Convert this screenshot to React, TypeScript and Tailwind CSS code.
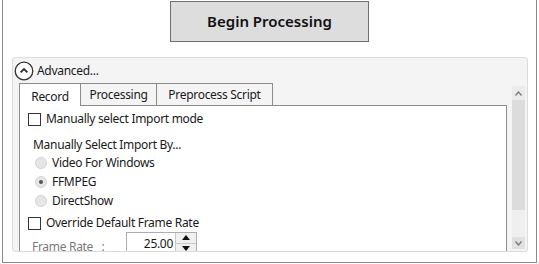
import React from "react";

const font = { fontFamily: '"Noto Sans", "Segoe UI", sans-serif' };

function Checkbox({ label }: { label: string }) {
  return (
    <div className="flex h-[18px] items-center pl-[8px]">
      <div className="h-[13px] w-[13px] border border-[#333333] bg-white" />
      <span className="ml-[5px] text-[12px] leading-none tracking-[-0.3px] text-[#1a1a1a]">{label}</span>
    </div>
  );
}

function Radio({ label, checked }: { label: string; checked?: boolean }) {
  return (
    <div className="flex h-[19px] items-center pl-[15px]">
      <div className="flex h-[12px] w-[12px] items-center justify-center rounded-full border border-[#d2d2d2] bg-[#e6e6e6]">
        {checked && <div className="h-[4px] w-[4px] rounded-full bg-[#555555]" />}
      </div>
      <span className="ml-[5px] text-[12px] leading-none tracking-[-0.3px] text-[#1a1a1a]">{label}</span>
    </div>
  );
}

export default function App() {
  return (
    <div className="h-[264px] w-[539px] overflow-hidden bg-white" style={font}>
      <div className="ml-[2px] h-[263px] w-[535px] border-x border-b border-[#8a8a8a]">
        <div className="flex justify-center pt-[1px]">
          <div className="flex h-[41px] w-[199px] items-center justify-center border border-[#707070] bg-[#dddddd] text-[15px] font-semibold text-[#111111]">
            Begin Processing
          </div>
        </div>
        <div className="ml-[9px] mt-[15px] h-[195px] w-[516px] overflow-hidden rounded-[3px] border border-[#dcdcdc] bg-[#f4f4f4]">
          <div className="flex h-[25px] items-center pl-[1px] pt-[1px]">
            <svg width="20" height="20" viewBox="0 0 20 20">
              <circle cx="10" cy="10" r="8.8" fill="white" stroke="#333333" strokeWidth="1.3" />
              <path d="M6.6 11.4 L10 8 L13.4 11.4" fill="none" stroke="#333333" strokeWidth="1.9" />
            </svg>
            <span className="ml-[3px] text-[12px] leading-none tracking-[-0.3px] text-[#1a1a1a]">Advanced...</span>
          </div>
          <div className="flex">
            <div className="ml-[6px] w-[488px]">
              <div className="flex h-[23px] text-[12px] leading-none tracking-[-0.3px] text-[#1a1a1a]">
                <div className="flex w-[62px] items-center justify-center border-x border-t border-[#8c8c8c] bg-white pt-[3px]">Record</div>
                <div className="flex w-[76px] items-center justify-center border-t border-r border-b border-[#8c8c8c]">Processing</div>
                <div className="flex w-[116px] items-center justify-center border-t border-r border-b border-[#8c8c8c]">Preprocess Script</div>
                <div className="flex-1 border-b border-[#8c8c8c]" />
              </div>
              <div className="h-[150px] border-x border-[#8c8c8c] bg-white pt-[4px]">
                <Checkbox label="Manually select Import mode" />
                <div className="mt-[9px] flex h-[16px] items-center pl-[13px] text-[12px] leading-none tracking-[-0.3px] text-[#1a1a1a]">
                  Manually Select Import By...
                </div>
                <Radio label="Video For Windows" />
                <Radio label="FFMPEG" checked />
                <Radio label="DirectShow" />
                <div className="mt-[4px]">
                  <Checkbox label="Override Default Frame Rate" />
                </div>
                <div className="flex items-start">
                  <div className="ml-[12px] mt-[9px] w-[94px] text-[12px] leading-none tracking-[-0.3px] text-[#7a7a7a]">Frame Rate&nbsp;&nbsp;&nbsp;:</div>
                  <div className="flex h-[22px] w-[71px] border border-[#abadb3] bg-white">
                    <div className="flex flex-1 items-center justify-end pr-[2px] pt-[1px] text-[12px] leading-none tracking-[-0.3px] text-[#1a1a1a]">25.00</div>
                    <div className="flex w-[21px] flex-col border-l border-[#c8c8c8]">
                      <div className="flex h-[11px] items-center justify-center border-b border-[#c8c8c8] bg-[#f0f0f0]">
                        <svg width="8" height="5" viewBox="0 0 8 5"><path d="M0 5 L4 0 L8 5 Z" fill="#111" /></svg>
                      </div>
                      <div className="flex h-[10px] items-center justify-center bg-[#f0f0f0]">
                        <svg width="8" height="5" viewBox="0 0 8 5"><path d="M0 0 L4 5 L8 0 Z" fill="#111" /></svg>
                      </div>
                    </div>
                  </div>
                </div>
              </div>
            </div>
            <div className="ml-[5px] mt-[3px] flex h-[163px] w-[13px] flex-col bg-[#efefef]">
              <div className="flex h-[14px] items-center justify-center bg-[#ebebeb]">
                <svg width="7" height="5" viewBox="0 0 7 5"><path d="M0.5 4.5 L3.5 1 L6.5 4.5" fill="none" stroke="#777" strokeWidth="1.3" /></svg>
              </div>
              <div className="h-[110px] bg-[#dcdcdc]" />
              <div className="flex-1" />
              <div className="flex h-[12px] items-center justify-center bg-[#e0e0e0]">
                <svg width="7" height="5" viewBox="0 0 7 5"><path d="M0.5 0.5 L3.5 4 L6.5 0.5" fill="none" stroke="#777" strokeWidth="1.3" /></svg>
              </div>
            </div>
          </div>
        </div>
      </div>
    </div>
  );
}
